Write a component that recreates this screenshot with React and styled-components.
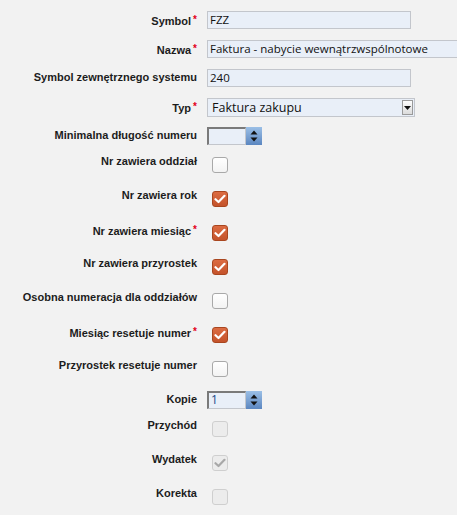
import React from "react";
import styled, { createGlobalStyle } from "styled-components";

const Global = createGlobalStyle`
  html, body {
    margin: 0;
    padding: 0;
    background: #f2f2f2;
    overflow: hidden;
  }
`;

const Form = styled.div`
  padding-top: 11px;
  width: 457px;
  overflow: hidden;
`;

const Row = styled.div`
  display: flex;
  align-items: flex-start;
  height: ${(p) => p.$h}px;
`;

const Label = styled.div`
  flex: 0 0 197px;
  text-align: right;
  font-family: "Liberation Sans", Arial, sans-serif;
  font-weight: bold;
  font-size: 11px;
  line-height: 17px;
  color: #1c1c1c;
  white-space: nowrap;
`;

const Req = styled.span`
  color: #e2001a;
  font-size: 10px;
  margin-left: 2px;
  vertical-align: 2px;
`;

const Field = styled.div`
  margin-left: 10px;
  display: flex;
  align-items: flex-start;
`;

const TextInput = styled.div`
  box-sizing: border-box;
  width: ${(p) => p.$w}px;
  flex: 0 0 auto;
  height: 18px;
  background: #e9eff8;
  border: 1px solid #c3c6cc;
  padding-left: 2px;
  font-family: "Open Sans", "DejaVu Sans", sans-serif;
  font-size: 11.5px;
  line-height: 16px;
  color: #111;
  white-space: nowrap;
`;

const Select = styled.div`
  box-sizing: border-box;
  width: 208px;
  height: 19px;
  background: #e9eff8;
  border: 1px solid #c3c6cc;
  display: flex;
  align-items: center;
  justify-content: space-between;
  padding: 0 1px 0 4px;
  font-family: "Open Sans", "DejaVu Sans", sans-serif;
  font-size: 12.5px;
  color: #111;
`;

const DropBtn = styled.span`
  box-sizing: border-box;
  width: 11px;
  height: 15px;
  background: linear-gradient(#fdfdfd, #dcdcdc);
  border: 1px solid #9a9a9a;
  display: flex;
  align-items: center;
  justify-content: center;
`;

const Spinner = styled.div`
  display: flex;
  height: 18px;
`;

const SpinInput = styled.div`
  box-sizing: border-box;
  width: 39px;
  height: 18px;
  background: #e9eff8;
  border-top: 2px solid #7a7a7a;
  border-left: 2px solid #7a7a7a;
  border-right: 1px solid #c3c6cc;
  border-bottom: 1px solid #c3c6cc;
  padding-left: 2px;
  font-family: "Open Sans", "DejaVu Sans", sans-serif;
  font-size: 12px;
  line-height: 14px;
  color: #1a4a8a;
`;

const SpinBtn = styled.div`
  width: 16px;
  height: 18px;
  background: linear-gradient(#9bbfe6, #5b86c0);
  display: flex;
  align-items: center;
  justify-content: center;
`;

const boxStyles = {
  off: "background: linear-gradient(#ffffff, #f3f3f3); border: 1px solid #a9a9a9;",
  on: "background: linear-gradient(#dc6c42, #c4532b); border: 1px solid #a9461f;",
  dis: "background: #ececec; border: 1px solid #cfcfcf;",
  disOn: "background: #ececec; border: 1px solid #cfcfcf;",
};

const Check = styled.span`
  box-sizing: border-box;
  width: 16px;
  height: 16px;
  margin: 4px 0 0 5px;
  border-radius: 3px;
  display: flex;
  align-items: center;
  justify-content: center;
  ${(p) => boxStyles[p.$v]}
`;

function Tick({ color }) {
  return (
    <svg width="12" height="10" viewBox="0 0 12 10">
      <path d="M1.5 5.2 L4.5 8 L10.5 1.8" fill="none" stroke={color} strokeWidth="2.2" strokeLinecap="round" strokeLinejoin="round" />
    </svg>
  );
}

function CheckBox({ v }) {
  return (
    <Check $v={v}>
      {v === "on" && <Tick color="#fff" />}
      {v === "disOn" && <Tick color="#a8a8a8" />}
    </Check>
  );
}

function SpinField({ value }) {
  return (
    <Spinner>
      <SpinInput>{value}</SpinInput>
      <SpinBtn>
        <svg width="8" height="12" viewBox="0 0 8 12">
          <path d="M4 0.5 L7.5 4.5 L0.5 4.5 Z" fill="#111" />
          <path d="M0.5 7.5 L7.5 7.5 L4 11.5 Z" fill="#111" />
        </svg>
      </SpinBtn>
    </Spinner>
  );
}

const checks = [
  ["Nr zawiera oddział", "off"],
  ["Nr zawiera rok", "on"],
  ["Nr zawiera miesiąc", "on", true],
  ["Nr zawiera przyrostek", "on"],
  ["Osobna numeracja dla oddziałów", "off"],
  ["Miesiąc resetuje numer", "on", true],
  ["Przyrostek resetuje numer", "off"],
];

const lastChecks = [
  ["Przychód", "dis"],
  ["Wydatek", "disOn"],
  ["Korekta", "dis"],
];

function FieldLabel({ text, req }) {
  return (
    <Label>
      {text}
      {req && <Req>*</Req>}
    </Label>
  );
}

export default function App() {
  return (
    <>
      <Global />
      <Form>
        <Row $h={29}>
          <FieldLabel text="Symbol" req />
          <Field>
            <TextInput $w={204}>FZZ</TextInput>
          </Field>
        </Row>
        <Row $h={29}>
          <FieldLabel text="Nazwa" req />
          <Field>
            <TextInput $w={270}>Faktura - nabycie wewnątrzwspólnotowe</TextInput>
          </Field>
        </Row>
        <Row $h={29}>
          <FieldLabel text="Symbol zewnętrznego systemu" />
          <Field>
            <TextInput $w={204}>240</TextInput>
          </Field>
        </Row>
        <Row $h={29}>
          <FieldLabel text="Typ" req />
          <Field>
            <Select>
              <span>Faktura zakupu</span>
              <DropBtn>
                <svg width="7" height="4" viewBox="0 0 7 4">
                  <path d="M0 0 L7 0 L3.5 4 Z" fill="#111" />
                </svg>
              </DropBtn>
            </Select>
          </Field>
        </Row>
        <Row $h={26}>
          <FieldLabel text="Minimalna długość numeru" />
          <Field>
            <SpinField value="" />
          </Field>
        </Row>
        {checks.map(([text, v, req]) => (
          <Row $h={34} key={text}>
            <FieldLabel text={text} req={req} />
            <Field>
              <CheckBox v={v} />
            </Field>
          </Row>
        ))}
        <Row $h={26}>
          <FieldLabel text="Kopie" />
          <Field>
            <SpinField value="1" />
          </Field>
        </Row>
        {lastChecks.map(([text, v]) => (
          <Row $h={34} key={text}>
            <FieldLabel text={text} />
            <Field>
              <CheckBox v={v} />
            </Field>
          </Row>
        ))}
      </Form>
    </>
  );
}
